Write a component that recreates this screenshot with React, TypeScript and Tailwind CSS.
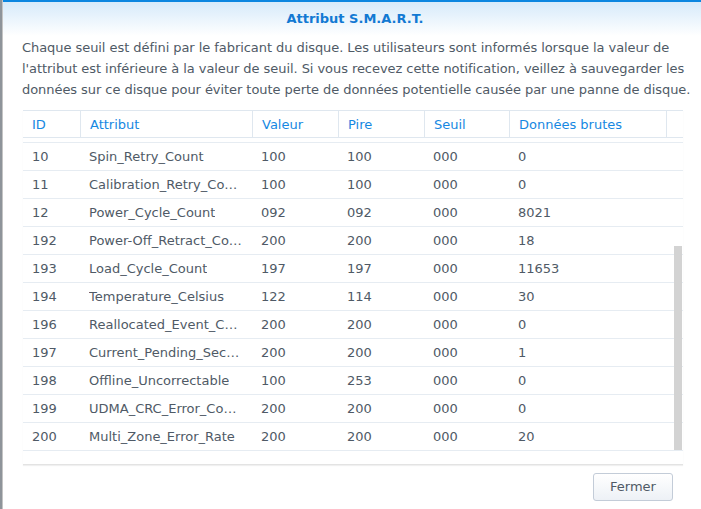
import React from "react";

type Row = [string, string, string, string, string, string];

const rows: Row[] = [
  ["10", "Spin_Retry_Count", "100", "100", "000", "0"],
  ["11", "Calibration_Retry_Count", "100", "100", "000", "0"],
  ["12", "Power_Cycle_Count", "092", "092", "000", "8021"],
  ["192", "Power-Off_Retract_Count", "200", "200", "000", "18"],
  ["193", "Load_Cycle_Count", "197", "197", "000", "11653"],
  ["194", "Temperature_Celsius", "122", "114", "000", "30"],
  ["196", "Reallocated_Event_Count", "200", "200", "000", "0"],
  ["197", "Current_Pending_Sector", "200", "200", "000", "1"],
  ["198", "Offline_Uncorrectable", "100", "253", "000", "0"],
  ["199", "UDMA_CRC_Error_Count", "200", "200", "000", "0"],
  ["200", "Multi_Zone_Error_Rate", "200", "200", "000", "20"],
];

const cols = "grid grid-cols-[57px_172px_86px_86px_85px_157px_17px]";
const headers = ["ID", "Attribut", "Valeur", "Pire", "Seuil", "Données brutes", ""];

export default function App() {
  return (
    <div className="flex w-[701px] h-[509px] overflow-hidden bg-white font-['DejaVu_Sans',_Verdana,_sans-serif] text-[13px]">
      {/* window behind the dialog */}
      <div className="w-[3px] shrink-0 bg-[#8e949a] border-r border-[#c4c4c4]" />

      <div className="flex flex-col flex-1 min-w-0 bg-white">
        {/* title bar */}
        <div className="h-[36px] shrink-0 border-t-[2px] border-[#0b86e0] bg-gradient-to-b from-[#d6eafa] to-white flex items-center justify-center">
          <span className="font-bold text-[#1279d3] text-[13px] ml-[6px]">Attribut S.M.A.R.T.</span>
        </div>

        <div className="pl-[19px] pr-[18px] flex flex-col">
          <p className="text-[#4f5a66] leading-[21px] pt-[1px] whitespace-nowrap tracking-[-0.06px]">
            Chaque seuil est défini par le fabricant du disque. Les utilisateurs sont informés lorsque la valeur de
            <br />
            l'attribut est inférieure à la valeur de seuil. Si vous recevez cette notification, veillez à sauvegarder les
            <br />
            données sur ce disque pour éviter toute perte de données potentielle causée par une panne de disque.
          </p>

          {/* grid */}
          <div className="mt-[10px] ml-[1px] w-[660px] border-b border-[#e3e3e3] shadow-[0_1px_1px_#f0f0f0]">
            <div className={`${cols} h-[28px] border-y border-[#dfe7ef]`}>
              {headers.map((h, i) => (
                <div
                  key={i}
                  className={`flex items-center pl-[9px] pt-[1px] text-[#1688e2] ${i > 0 ? "border-l border-[#dfe7ef]" : ""}`}
                >
                  {h}
                </div>
              ))}
            </div>

            <div className="relative h-[326px] overflow-hidden">
              {/* sliver of the row scrolled out above */}
              <div className="h-[5px] border-b border-[#e6ecf2]" />
              {rows.map((r) => (
                <div key={r[0]} className={`${cols} h-[28px] border-b border-[#e6ecf2] text-[#4f5a66]`}>
                  {r.map((c, i) => (
                    <div key={i} className="flex items-center pl-[9px] pr-[8px] min-w-0">
                      <span className="truncate">{c}</span>
                    </div>
                  ))}
                  <div />
                </div>
              ))}
              {/* scrollbar thumb */}
              <div className="absolute right-[1px] top-[108px] w-[8px] h-[204px] bg-[#d3d3d3]" />
            </div>
          </div>

          <div className="flex justify-end pt-[8px] pr-[10px]">
            <button className="w-[80px] h-[28px] rounded-[3px] border border-[#c3ccd8] bg-gradient-to-b from-white to-[#edf1f6] text-[#4f5a66] text-[13px]">
              Fermer
            </button>
          </div>
        </div>
      </div>
    </div>
  );
}
